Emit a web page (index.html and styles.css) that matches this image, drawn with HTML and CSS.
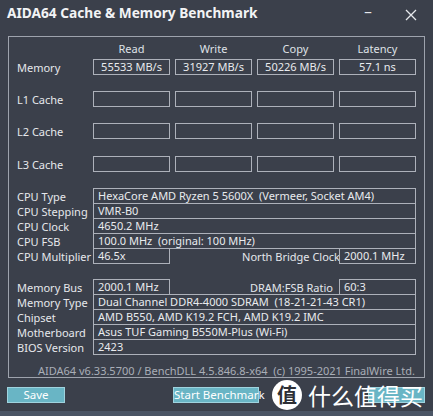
FILE: index.html
```html
<!DOCTYPE html>
<html>
<head>
<meta charset="utf-8">
<link rel="stylesheet" href="styles.css">
</head>
<body>
<div class="win">
  <div class="titlebar">
    <div class="title">AIDA64 Cache &amp; Memory Benchmark</div>
    <div class="minbtn">&#x2013;</div>
    <div class="closebtn"><svg class="ic" width="14" height="14" viewBox="0 0 14 14"><path d="M2 2 L12 12 M12 2 L2 12" stroke="#e6e8ec" stroke-width="1.3"/></svg></div>
  </div>
  <div class="group">
    <div class="grid head">
      <div></div><div class="hc">Read</div><div class="hc">Write</div><div class="hc">Copy</div><div class="hc">Latency</div>
    </div>
    <div class="grid row r-mem">
      <div class="lbl">Memory</div>
      <div class="box c">55533 MB/s</div><div class="box c">31927 MB/s</div><div class="box c">50226 MB/s</div><div class="box c">57.1 ns</div>
    </div>
    <div class="grid row r-c">
      <div class="lbl">L1 Cache</div>
      <div class="box"></div><div class="box"></div><div class="box"></div><div class="box"></div>
    </div>
    <div class="grid row r-c">
      <div class="lbl">L2 Cache</div>
      <div class="box"></div><div class="box"></div><div class="box"></div><div class="box"></div>
    </div>
    <div class="grid row r-c r-l3">
      <div class="lbl">L3 Cache</div>
      <div class="box"></div><div class="box"></div><div class="box"></div><div class="box"></div>
    </div>

    <div class="info cpu">
      <div class="grid irow"><div class="lbl">CPU Type</div><div class="box w">HexaCore AMD Ryzen 5 5600X  (Vermeer, Socket AM4)</div></div>
      <div class="grid irow"><div class="lbl">CPU Stepping</div><div class="box w">VMR-B0</div></div>
      <div class="grid irow"><div class="lbl">CPU Clock</div><div class="box w">4650.2 MHz</div></div>
      <div class="grid irow"><div class="lbl">CPU FSB</div><div class="box w">100.0 MHz  (original: 100 MHz)</div></div>
      <div class="grid irow"><div class="lbl">CPU Multiplier</div><div class="box l c2">46.5x</div><div class="rl nb">North Bridge Clock</div><div class="box l c5">2000.1 MHz</div></div>
    </div>

    <div class="info mem">
      <div class="grid irow"><div class="lbl">Memory Bus</div><div class="box l c2">2000.1 MHz</div><div class="rl">DRAM:FSB Ratio</div><div class="box l c5">60:3</div></div>
      <div class="grid irow"><div class="lbl">Memory Type</div><div class="box w">Dual Channel DDR4-4000 SDRAM  (18-21-21-43 CR1)</div></div>
      <div class="grid irow"><div class="lbl">Chipset</div><div class="box w">AMD B550, AMD K19.2 FCH, AMD K19.2 IMC</div></div>
      <div class="grid irow"><div class="lbl">Motherboard</div><div class="box w">Asus TUF Gaming B550M-Plus (Wi-Fi)</div></div>
      <div class="grid irow"><div class="lbl">BIOS Version</div><div class="box w">2423</div></div>
    </div>

    <div class="foot">AIDA64 v6.33.5700 / BenchDLL 4.5.846.8-x64  (c) 1995-2021 FinalWire Ltd.</div>
  </div>
  <div class="buttons">
    <div class="btn b-save">Save</div>
    <div class="btn b-start">Start Benchmark</div>
    <div class="btn b-close">Close</div>
    <div class="mark">
      <div class="logo">值</div>
      <div class="mtext">什么值得买</div>
    </div>
  </div>
  <div class="bottom"></div>
</div>
</body>
</html>
```

FILE: styles.css
```css
* { box-sizing: border-box; }
html, body { margin: 0; padding: 0; }
body {
  width: 433px;
  height: 416px;
  background: #3b404b;
  font-family: "Noto Sans", "Open Sans", sans-serif;
  font-size: 11px;
  color: #e4e7ec;
  overflow: hidden;
}
.win { width: 433px; height: 416px; display: flex; flex-direction: column; position: relative; }
.titlebar {
  height: 36px;
  display: flex;
  align-items: flex-start;
  padding: 3px 0 0 7px;
}
.title { font-weight: bold; font-size: 13.7px; color: #f2f3f5; flex: 1; }
.minbtn {
  width: 16px;
  margin-right: 28px;
  flex: none;
  font-family: "DejaVu Sans", sans-serif;
  font-size: 16px;
  line-height: 18px;
  color: #e6e8ec;
  text-align: center;
}
.closebtn { width: 14px; padding-top: 5px; margin-right: 15px; flex: none; }
.ic { display: block; }
.group {
  margin-left: 8px;
  width: 417px;
  height: 342px;
  border: 1px solid #9ea3ad;
  padding: 3px 8px 0 8px;
  display: flex;
  flex-direction: column;
}
.grid {
  display: grid;
  grid-template-columns: 71px 77px 77px 77px 77px;
  grid-template-rows: 16px;
  column-gap: 5px;
  align-items: center;
}
.head { height: 17px; grid-template-rows: 17px; }
.hc { text-align: center; color: #dfe2e7; }
.row { height: 16px; }
.r-mem { margin-top: 2px; }
.r-c { margin-top: 16px; }
.r-l3 { margin-top: 17px; }
.lbl { white-space: nowrap; color: #e6e8ec; grid-column: 1; grid-row: 1; }
.box {
  height: 16px;
  border: 1px solid #adb1ba;
  line-height: 14px;
  white-space: pre;
  overflow: hidden;
  color: #e9ebee;
  padding: 0 4px;
}
.box.c { text-align: center; }
.box.w { grid-column: 2 / 6; grid-row: 1; }
.c2 { grid-column: 2; grid-row: 1; }
.c5 { grid-column: 5; grid-row: 1; }
.rl { grid-column: 3 / 5; grid-row: 1; text-align: right; white-space: nowrap; padding-right: 1px; }
.rl.nb { margin-right: -7px; }
.info { display: flex; flex-direction: column; }
.irow { height: 16px; margin-top: -1px; }
.cpu { margin-top: 16px; }
.cpu .irow:first-child { margin-top: 0; }
.mem { margin-top: 15px; }
.mem .irow:first-child { margin-top: 0; }
.foot {
  margin-top: 8px;
  text-align: right;
  color: #a9aeb7;
  white-space: pre;
  font-size: 11px;
  margin-right: 1px;
}
.buttons {
  position: relative;
  height: 33px;
  display: flex;
  align-items: flex-start;
  padding-top: 9px;
}
.btn {
  height: 16px;
  background: #69b5c5;
  border: 1px solid #9fd3de;
  color: #ffffff;
  font-size: 11.5px;
  line-height: 14px;
  text-align: center;
  white-space: nowrap;
}
.b-save { margin-left: 7px; width: 58px; }
.b-start { margin-left: 108px; width: 86px; }
.b-close { margin-left: 109px; width: 57px; color: #69b5c5; }
.mark {
  position: absolute;
  left: 272px;
  top: 2px;
  display: flex;
  align-items: center;
  gap: 6px;
}
.logo {
  width: 30px;
  height: 30px;
  border-radius: 50%;
  background: #ffffff;
  color: #2d2f36;
  font-family: "Noto Sans CJK SC", sans-serif;
  font-weight: bold;
  font-size: 20px;
  line-height: 29px;
  text-align: center;
}
.mtext {
  font-family: "Noto Sans CJK SC", sans-serif;
  font-size: 23px;
  color: #ffffff;
  line-height: 30px;
}
.bottom { flex: 1; background: #4b5565; }
```
